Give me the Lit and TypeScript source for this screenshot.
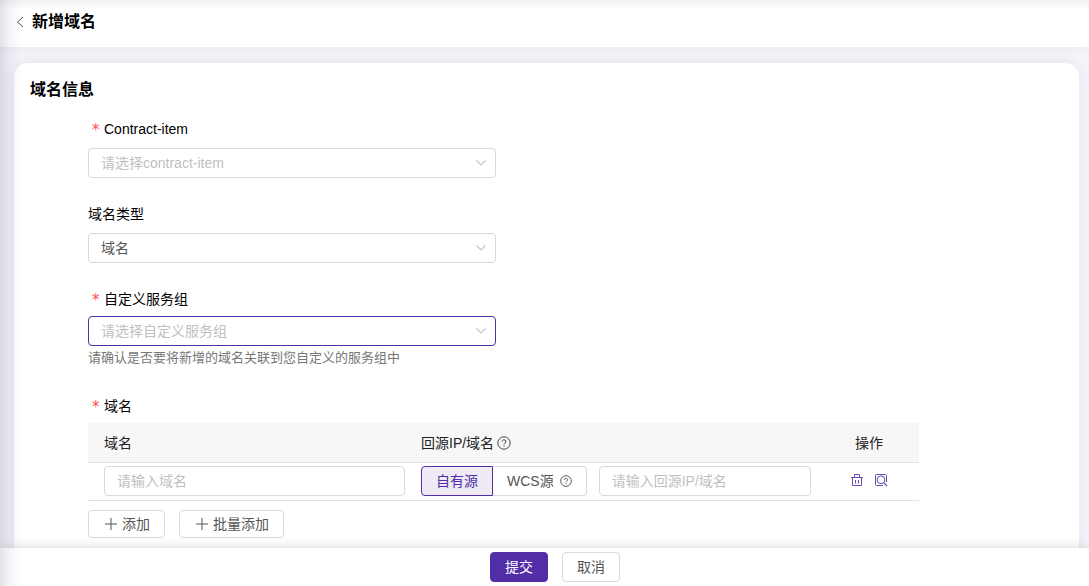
import { LitElement, html, css } from "lit";
import { customElement, state } from "lit/decorators.js";

const helpIcon = html`<svg class="help-icon" viewBox="0 0 14 14" aria-hidden="true">
  <circle cx="7" cy="7" r="6.2" fill="none" stroke="currentColor" />
  <path d="M5.2 5.6a1.8 1.8 0 1 1 2.7 1.5c-.6.4-.9.6-.9 1.3" fill="none" stroke="currentColor" />
  <path d="M6.4 9.5h1.2v1.1H6.4z" fill="currentColor" />
</svg>`;

const plusIcon = html`<svg class="plus-icon" viewBox="0 0 12 12" aria-hidden="true">
  <path d="M6 0v12M0 6h12" fill="none" stroke="currentColor" />
</svg>`;

const chevron = html`<svg class="chevron" viewBox="0 0 12 12" aria-hidden="true">
  <path d="M1.5 3.5 6 8l4.500-4.500" fill="none" stroke="currentColor" stroke-width="1.200" />
</svg>`;

@customElement("app-root")
export class AppRoot extends LitElement {
  static styles = css`
    :host {
      display: flex;
      flex-direction: column;
      position: relative;
      height: 100vh;
      overflow: hidden;
      background: #f5f5fa;
      color: #000;
      font: 14px/20px "Liberation Sans", "Noto Sans CJK SC", sans-serif;
    }
    * {
      box-sizing: border-box;
    }
    input,
    select,
    button {
      font: inherit;
      margin: 0;
    }
    .side-shade {
      position: absolute;
      inset: 0 auto 0 0;
      width: 22px;
      background: linear-gradient(to right, rgba(60, 60, 100, 0.15), rgba(60, 60, 100, 0.06) 40%, rgba(60, 60, 100, 0));
      pointer-events: none;
      z-index: 3;
    }
    .page-header {
      display: flex;
      align-items: center;
      gap: 8px;
      padding: 12px 16px 15px;
      background: linear-gradient(#f2f2f2, #fff 9px);
      box-shadow: 0 0 12px rgba(0, 0, 0, 0.07);
      z-index: 1;
    }
    .back {
      display: flex;
      color: #555;
    }
    .back svg {
      width: 8px;
      height: 12px;
    }
    h1,
    h2 {
      margin: 0;
      font-size: 16px;
      line-height: 20px;
      font-weight: 700;
    }
    main {
      flex: 1;
      min-height: 0;
      display: flex;
      flex-direction: column;
      padding: 16px 10px 0 14px;
      overflow: auto;
      scrollbar-width: none;
    }
    .card {
      flex: 1 0 auto;
      padding: 17px 16px 10px;
      background: #fff;
      border-radius: 14px 14px 0 0;
      box-shadow: 0 0 16px rgba(50, 50, 90, 0.1);
    }
    form {
      display: flex;
      flex-direction: column;
      gap: 26px;
      max-width: 889px;
      margin-top: 19px;
      padding-left: 58px;
    }
    .field {
      display: flex;
      flex-direction: column;
      gap: 9px;
    }
    .field.tight {
      gap: 7px;
    }
    .label {
      display: flex;
      gap: 4px;
    }
    .star {
      padding-left: 4px;
      width: 12px;
      color: #ff4d4f;
      font-family: "DejaVu Sans", sans-serif;
      font-size: 15px;
      line-height: 22px;
      height: 20px;
    }
    .select {
      position: relative;
      width: 100%;
      max-width: 408px;
    }
    select {
      appearance: none;
      display: block;
      width: 100%;
      height: 30px;
      padding: 0 30px 0 12px;
      border: 1px solid #d9d9d9;
      border-radius: 4px;
      background: #fff;
      color: #555;
      outline: none;
    }
    select.empty {
      color: #bfbfbf;
    }
    select.active {
      border-color: #522da8;
    }
    .chevron {
      position: absolute;
      right: 9px;
      top: 9px;
      width: 12px;
      height: 12px;
      color: #c4c4c4;
      pointer-events: none;
    }
    .hint {
      margin: -6px 0 2px;
      color: #777;
      font-size: 13px;
      line-height: 21px;
    }
    table {
      width: 100%;
      border-collapse: separate;
      border-spacing: 0;
      table-layout: fixed;
    }
    th,
    td {
      padding: 3px 8px 4px;
      border-bottom: 1px solid #e2e2e2;
      text-align: left;
      vertical-align: middle;
    }
    th {
      height: 40px;
      padding: 4px 8px 3px;
      background: #f7f7f7;
      color: #222;
      font-weight: 400;
    }
    th:first-child,
    td:first-child {
      padding-left: 16px;
    }
    th:last-child,
    td:last-child {
      text-align: center;
    }
    .col-domain {
      width: 325px;
    }
    .col-actions {
      width: 100px;
    }
    .with-icon {
      display: flex;
      align-items: center;
      gap: 3px;
    }
    .help-icon {
      width: 14px;
      height: 14px;
      color: #444;
      flex: none;
    }
    .radio .help-icon {
      width: 12px;
      height: 12px;
    }
    .text-input {
      display: block;
      width: 100%;
      min-width: 0;
      height: 30px;
      padding: 0 12px;
      border: 1px solid #d9d9d9;
      border-radius: 4px;
      background: #fff;
      color: #555;
      outline: none;
    }
    .text-input::placeholder {
      color: #bfbfbf;
      opacity: 1;
    }
    .origin {
      display: flex;
      gap: 12px;
    }
    .radios {
      display: flex;
      flex: none;
    }
    .radio {
      position: relative;
      display: flex;
      align-items: center;
      gap: 6px;
      height: 30px;
      padding: 0 14px;
      border: 1px solid #d9d9d9;
      color: #555;
      cursor: pointer;
    }
    .radio:first-child {
      border-radius: 4px 0 0 4px;
      border-right: 0;
      padding-right: 15px;
    }
    .radio:last-child {
      border-left: 0;
      border-radius: 0 4px 4px 0;
    }
    .radio.on {
      padding: 0 14px;
      border: 1px solid #522da8;
      background: #eeeaf6;
      color: #522da8;
    }
    .radio input {
      position: absolute;
      inset: 0;
      opacity: 0;
      pointer-events: none;
    }
    .actions {
      display: flex;
      justify-content: center;
      gap: 10px;
      padding-bottom: 2px;
    }
    .icon-button {
      display: flex;
      padding: 0;
      border: 0;
      background: none;
      color: #6a4ab5;
      cursor: pointer;
    }
    .icon-button svg {
      width: 14px;
      height: 14px;
    }
    .row-buttons {
      display: flex;
      gap: 14px;
    }
    .domains {
      gap: 9px;
    }
    .domains .label {
      margin-bottom: -2px;
    }
    .button {
      display: flex;
      align-items: center;
      gap: 5px;
      height: 30px;
      padding: 0 14px;
      border: 1px solid #d9d9d9;
      border-radius: 4px;
      background: #fff;
      color: #555;
      cursor: pointer;
    }
    .button.small {
      height: 28px;
      padding: 0 14px 0 16px;
    }
    .button.primary {
      border-color: #522da8;
      background: #522da8;
      color: #fff;
    }
    .plus-icon {
      width: 12px;
      height: 12px;
    }
    footer {
      display: flex;
      justify-content: center;
      gap: 14px;
      padding: 4px 0 4px 21px;
      background: #fff;
      box-shadow: 0 0 12px rgba(0, 0, 0, 0.16);
      z-index: 2;
    }
  `;

  @state() private origin = "own";

  private choose(value: string) {
    this.origin = value;
  }

  render() {
    return html`
      <div class="side-shade"></div>
      <header class="page-header">
        <a class="back" href="#" aria-label="返回">
          <svg viewBox="0 0 8 12"><path d="M7 1 1.500 6 7 11" fill="none" stroke="currentColor" /></svg>
        </a>
        <h1>新增域名</h1>
      </header>
      <main>
        <section class="card">
          <h2>域名信息</h2>
          <form @submit=${(e: Event) => e.preventDefault()} id="domain-form">
            <div class="field">
              <label class="label" for="contract"><span class="star">*</span>Contract-item</label>
              <div class="select">
                <select id="contract" class="empty">
                  <option>请选择contract-item</option>
                </select>
                ${chevron}
              </div>
            </div>
            <div class="field">
              <label class="label" for="kind">域名类型</label>
              <div class="select">
                <select id="kind">
                  <option>域名</option>
                </select>
                ${chevron}
              </div>
            </div>
            <div class="field tight">
              <label class="label" for="group"><span class="star">*</span>自定义服务组</label>
              <div class="select">
                <select id="group" class="empty active">
                  <option>请选择自定义服务组</option>
                </select>
                ${chevron}
              </div>
              <p class="hint">请确认是否要将新增的域名关联到您自定义的服务组中</p>
            </div>
            <div class="field domains">
              <label class="label" for="domain"><span class="star">*</span>域名</label>
              <table>
                <colgroup>
                  <col class="col-domain" />
                  <col />
                  <col class="col-actions" />
                </colgroup>
                <thead>
                  <tr>
                    <th>域名</th>
                    <th><span class="with-icon">回源IP/域名${helpIcon}</span></th>
                    <th>操作</th>
                  </tr>
                </thead>
                <tbody>
                  <tr>
                    <td><input id="domain" class="text-input" type="text" placeholder="请输入域名" /></td>
                    <td>
                      <div class="origin">
                        <div class="radios" role="radiogroup" aria-label="回源IP/域名">
                          <label class="radio ${this.origin === "own" ? "on" : ""}">
                            <input type="radio" name="origin" .checked=${this.origin === "own"} @change=${() => this.choose("own")} />自有源
                          </label>
                          <label class="radio ${this.origin === "wcs" ? "on" : ""}">
                            <input type="radio" name="origin" .checked=${this.origin === "wcs"} @change=${() => this.choose("wcs")} />WCS源
                            ${helpIcon}
                          </label>
                        </div>
                        <input class="text-input" type="text" aria-label="回源IP/域名" placeholder="请输入回源IP/域名" />
                      </div>
                    </td>
                    <td>
                      <div class="actions">
                        <button type="button" class="icon-button" aria-label="删除">
                          <svg viewBox="0 0 14 14" fill="none" stroke="currentColor">
                            <path d="M1 4.500h12M4.500 4.500v-3h5v3M2.500 4.500v8h9v-8M5.500 7v3.500M8.500 7v3.500" />
                          </svg>
                        </button>
                        <button type="button" class="icon-button" aria-label="检测">
                          <svg viewBox="0 0 14 14" fill="none" stroke="currentColor">
                            <path d="M9 12.500H2.500a1 1 0 0 1-1-1v-9a1 1 0 0 1 1-1h9a1 1 0 0 1 1 1V9" />
                            <circle cx="7" cy="6.800" r="3.900" />
                            <path d="m9.800 9.600 3.200 3.400" stroke-width="1.200" />
                          </svg>
                        </button>
                      </div>
                    </td>
                  </tr>
                </tbody>
              </table>
              <div class="row-buttons">
                <button type="button" class="button small">${plusIcon}添加</button>
                <button type="button" class="button small">${plusIcon}批量添加</button>
              </div>
            </div>
          </form>
        </section>
      </main>
      <footer>
        <button type="submit" form="domain-form" class="button primary">提交</button>
        <button type="button" class="button">取消</button>
      </footer>
    `;
  }
}
